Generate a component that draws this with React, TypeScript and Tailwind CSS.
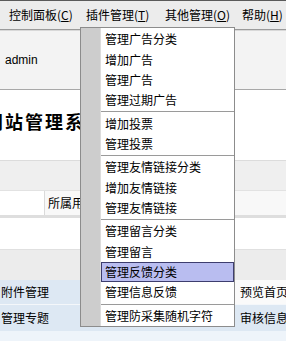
import React from 'react';

const font = { fontFamily: '"Noto Sans CJK SC", "Noto Sans", sans-serif' };

type Entry = { label: string; active?: boolean } | 'sep';

const pluginMenu: Entry[] = [
  { label: '管理广告分类' },
  { label: '增加广告' },
  { label: '管理广告' },
  { label: '管理过期广告' },
  'sep',
  { label: '增加投票' },
  { label: '管理投票' },
  'sep',
  { label: '管理友情链接分类' },
  { label: '增加友情链接' },
  { label: '管理友情链接' },
  'sep',
  { label: '管理留言分类' },
  { label: '管理留言' },
  { label: '管理反馈分类', active: true },
  { label: '管理信息反馈' },
  'sep',
  { label: '管理防采集随机字符' },
];

function MenuTitle({ text, hotkey, width }: { text: string; hotkey: string; width: string }) {
  return (
    <div className={`${width} shrink-0 whitespace-nowrap`}>
      {text}(<span className="underline">{hotkey}</span>)
    </div>
  );
}

export default function App() {
  return (
    <div
      className="relative w-[286px] h-[341px] overflow-hidden bg-white text-[12px] leading-none text-black"
      style={font}
    >
      {/* Menu bar */}
      <div className="h-[30px] border-t border-[#5a5a5a] border-b border-b-[#9a9a9a] bg-[#ececec] flex items-center pl-[9px] pb-[1px]">
        <MenuTitle text="控制面板" hotkey="C" width="w-[77px]" />
        <MenuTitle text="插件管理" hotkey="T" width="w-[79px]" />
        <MenuTitle text="其他管理" hotkey="O" width="w-[77px]" />
        <MenuTitle text="帮助" hotkey="H" width="w-[40px]" />
      </div>

      {/* Top info strip */}
      <div className="h-[60px] bg-[#f3f3f3] border-t border-[#d8d8d8] border-b border-b-[#a8a8a8] flex items-center pl-[5px]">
        <span style={{ fontFamily: '"Liberation Sans", sans-serif' }}>admin</span>
      </div>

      {/* Title */}
      <div className="h-[70px] bg-white pt-[22px] overflow-hidden">
        <div
          className="ml-[-15px] whitespace-nowrap text-[18px] font-bold tracking-[2px] text-black"
          style={{ fontFamily: '"Noto Sans CJK SC", "Liberation Serif", serif' }}
        >
          网站管理系统
        </div>
      </div>

      {/* Gray band */}
      <div className="h-[30px] bg-[#efefef] border-t border-[#dcdcdc]" />

      {/* Table header row */}
      <div className="h-[28px] flex border-t border-[#e2e2e2] border-b-[3px] border-b-[#dedede]">
        <div className="w-[45px] shrink-0 border-r border-[#dadada]" />
        <div className="flex-1 bg-[#f8f8f8] flex items-center pl-[3px] whitespace-nowrap">所属用户</div>
      </div>

      <div className="h-[31px] bg-white" />

      {/* Gray band */}
      <div className="h-[31px] bg-[#ececec] border-t border-[#e0e0e0]" />

      {/* Rows */}
      <div className="flex h-[25px] border-b border-[#f4f7fa] whitespace-nowrap">
        <div className="w-[150px] shrink-0 bg-[#dde8f3] flex items-center pl-[1px]">附件管理</div>
        <div className="flex-1 bg-[#fafafa] flex items-center pl-[90px]">预览首页</div>
      </div>
      <div className="flex h-[26px] bg-[#dde8f3] items-center whitespace-nowrap">
        <div className="w-[150px] shrink-0 pl-[1px]">管理专题</div>
        <div className="flex-1 pl-[90px]">审核信息</div>
      </div>
      <div className="h-[10px] bg-[#eef4fa]" />

      {/* Open dropdown: 插件管理 */}
      <div className="absolute left-[80px] top-[27px] w-[155px] h-[300px] border border-[#8c8c8c] bg-white flex">
        <div className="w-[20px] shrink-0 bg-[#cdcdcd] border-r border-[#dcdcdc]" />
        <div className="flex-1 flex flex-col pt-[1px]">
          {pluginMenu.map((e, i) =>
            e === 'sep' ? (
              <div key={i} className="h-[3px] flex items-center">
                <div className="h-[1px] w-full bg-[#9a9a9a]" />
              </div>
            ) : (
              <div
                key={i}
                className={
                  e.active
                    ? 'h-[21px] flex items-center pl-[3px] bg-[#b9bdf0] border border-[#3d3d6e]'
                    : 'h-[21px] flex items-center pl-[4px]'
                }
              >
                {e.label}
              </div>
            )
          )}
        </div>
      </div>
    </div>
  );
}
